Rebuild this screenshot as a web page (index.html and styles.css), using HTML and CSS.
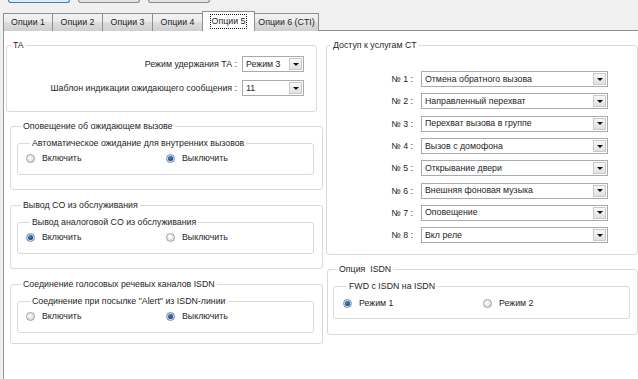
FILE: index.html
```html
<!DOCTYPE html>
<html lang="ru">
<head>
    <meta charset="UTF-8">
    <title>Опции 5</title>
    <link rel="stylesheet" href="styles.css">
</head>
<body>
    <div class="topbar">
        <div class="btn btn-focus"></div>
        <div class="btn"></div>
        <div class="btn"></div>
    </div>

    <div class="tabs">
        <div class="tab t1">Опции 1</div>
        <div class="tab t2">Опции 2</div>
        <div class="tab t3">Опции 3</div>
        <div class="tab t4">Опции 4</div>
        <div class="tab t5 active"><span class="focus">Опции 5</span></div>
        <div class="tab t6">Опции 6 (CTI)</div>
    </div>

    <div class="panel">
        <div class="col-left">
            <fieldset class="box box-ta">
                <legend>TA</legend>
                <div class="ta-row">
                    <span>Режим удержания ТА :</span>
                    <div class="select sel-short"><span class="val">Режим 3</span><span class="arrow"></span></div>
                </div>
                <div class="ta-row">
                    <span>Шаблон индикации ожидающего сообщения :</span>
                    <div class="select sel-short"><span class="val">11</span><span class="arrow"></span></div>
                </div>
            </fieldset>

            <fieldset class="box group">
                <legend>Оповещение об ожидающем вызове</legend>
                <fieldset class="box inner">
                    <legend>Автоматическое ожидание для внутренних вызовов</legend>
                    <div class="radios">
                        <label class="radio"><span class="dot"></span>Включить</label>
                        <label class="radio"><span class="dot on"></span>Выключить</label>
                    </div>
                </fieldset>
            </fieldset>

            <fieldset class="box group">
                <legend>Вывод CO из обслуживания</legend>
                <fieldset class="box inner">
                    <legend>Вывод аналоговой CO из обслуживания</legend>
                    <div class="radios">
                        <label class="radio"><span class="dot on"></span>Включить</label>
                        <label class="radio"><span class="dot"></span>Выключить</label>
                    </div>
                </fieldset>
            </fieldset>

            <fieldset class="box group group-last">
                <legend>Соединение голосовых речевых каналов ISDN</legend>
                <fieldset class="box inner">
                    <legend>Соединение при посылке "Alert" из ISDN-линии</legend>
                    <div class="radios">
                        <label class="radio"><span class="dot"></span>Включить</label>
                        <label class="radio"><span class="dot on"></span>Выключить</label>
                    </div>
                </fieldset>
            </fieldset>
        </div>

        <div class="col-right">
            <fieldset class="box box-ct">
                <legend>Доступ к услугам CT</legend>
                <div class="ct-list">
                    <span class="num">№ 1 :</span>
                    <div class="select"><span class="val">Отмена обратного вызова</span><span class="arrow"></span></div>
                    <span class="num">№ 2 :</span>
                    <div class="select"><span class="val">Направленный перехват</span><span class="arrow"></span></div>
                    <span class="num">№ 3 :</span>
                    <div class="select"><span class="val">Перехват вызова в группе</span><span class="arrow"></span></div>
                    <span class="num">№ 4 :</span>
                    <div class="select"><span class="val">Вызов с домофона</span><span class="arrow"></span></div>
                    <span class="num">№ 5 :</span>
                    <div class="select"><span class="val">Открывание двери</span><span class="arrow"></span></div>
                    <span class="num">№ 6 :</span>
                    <div class="select"><span class="val">Внешняя фоновая музыка</span><span class="arrow"></span></div>
                    <span class="num">№ 7 :</span>
                    <div class="select"><span class="val">Оповещение</span><span class="arrow"></span></div>
                    <span class="num">№ 8 :</span>
                    <div class="select"><span class="val">Вкл реле</span><span class="arrow"></span></div>
                </div>
            </fieldset>

            <fieldset class="box box-isdn">
                <legend>Опция&nbsp; ISDN</legend>
                <fieldset class="box inner inner-isdn">
                    <legend>FWD с ISDN на ISDN</legend>
                    <div class="radios">
                        <label class="radio"><span class="dot on"></span>Режим 1</label>
                        <label class="radio"><span class="dot"></span>Режим 2</label>
                    </div>
                </fieldset>
            </fieldset>
        </div>
    </div>
</body>
</html>
```

FILE: styles.css
```css
* {
    margin: 0;
    padding: 0;
    box-sizing: border-box;
}

body {
    font-family: 'Liberation Sans', Arial, sans-serif;
    font-size: 8.8px;
    color: #1e1e1e;
    background-color: #f0f0f0;
    height: 379px;
    overflow: hidden;
}

/* кнопки сверху (видна только нижняя часть) */
.topbar {
    display: flex;
    gap: 8px;
    padding-left: 8px;
    height: 4px;
}

.btn {
    width: 62px;
    height: 3px;
    border: 1px solid #8a8a8a;
    border-top: none;
    border-radius: 0 0 3px 3px;
    background: #e4e4e4;
}

.btn-focus {
    border-color: #3c7fb1;
    background: #dcecf8;
}

/* вкладки */
.tabs {
    display: flex;
    align-items: flex-end;
    margin-top: 7px;
    padding-left: 3px;
    height: 20px;
}

.tab {
    height: 18px;
    margin-left: -1px;
    border: 1px solid #8e8f8f;
    border-bottom: none;
    background: linear-gradient(#f2f2f2 0%, #ebebeb 45%, #dddddd 50%, #cfcfcf 100%);
    display: flex;
    align-items: center;
    justify-content: center;
    line-height: 11px;
}

.t1 { width: 50px; margin-left: 0; }
.t2 { width: 51px; }
.t3 { width: 51px; }
.t4 { width: 51px; }
.t5 { width: 53px; }
.t6 { width: 65px; }

.tab.active {
    height: 20px;
    background: #fff;
    position: relative;
    z-index: 1;
}

.focus {
    border: 1px dotted #222;
    padding: 1px 1px;
}

/* панель */
.panel {
    display: flex;
    margin-top: -1px;
    margin-left: 3px;
    height: 349px;
    background: #fff;
    border-left: 1px solid #9a9a9a;
    border-top: 1px solid #8e8f8f;
}

.col-left {
    width: 322px;
}

.col-right {
    flex: 1;
}

.box {
    border: 1px solid #dadada;
    border-radius: 3px;
}

.box legend {
    line-height: 11px;
    padding: 0 2px;
    margin-left: 4px;
}

.box-ta {
    margin: 9px 9px 0 2px;
    padding: 5px 12px 15px 0;
}

.ta-row {
    display: flex;
    justify-content: flex-end;
    align-items: center;
    gap: 5px;
}

.ta-row + .ta-row {
    margin-top: 8px;
}

.group {
    margin: 9px 3px 0 6px;
    padding: 6px 8px 14px 6px;
}

.group + .group {
    margin-top: 10px;
}

.group-last {
    padding-bottom: 10px;
}

.inner {
    padding: 3px 0 10px 8px;
}

.radios {
    display: grid;
    grid-template-columns: 140px 140px;
    height: 12px;
    align-items: center;
}

.radio {
    display: flex;
    align-items: center;
    gap: 7px;
}

.dot {
    width: 9px;
    height: 9px;
    border-radius: 50%;
    border: 1px solid #a0a0a0;
    background: radial-gradient(circle at 40% 35%, #ffffff 0%, #e6e6e6 55%, #c8c8c8 100%);
    display: flex;
    align-items: center;
    justify-content: center;
}

.dot.on {
    border-color: #7890ab;
    background: radial-gradient(circle, #dbe8f5 0%, #c3d6ea 100%);
}

.dot.on::after {
    content: "";
    width: 5px;
    height: 5px;
    border-radius: 50%;
    background: radial-gradient(circle at 40% 35%, #4e86c4 0%, #1d4b86 60%, #173a66 100%);
}

/* выпадающие списки */
.select {
    height: 16px;
    border: 1px solid #a7abb0;
    background: #fff;
    display: flex;
    align-items: center;
    justify-content: space-between;
    padding: 0 1px 0 3px;
}

.sel-short {
    width: 62px;
}

.val {
    white-space: nowrap;
    line-height: 11px;
}

.arrow {
    width: 13px;
    height: 12px;
    border: 1px solid #c9c9c9;
    background: linear-gradient(#f7f7f7, #e1e1e1);
    display: flex;
    align-items: center;
    justify-content: center;
}

.arrow::after {
    content: "";
    border-left: 3px solid transparent;
    border-right: 3px solid transparent;
    border-top: 3px solid #111;
}

.box-ct {
    margin: 9px 0 0 0;
    padding: 17px 0 8px 0;
}

.ct-list {
    display: grid;
    grid-template-columns: 86px 187px;
    grid-auto-rows: 22.3px;
    column-gap: 8px;
    align-items: center;
}

.num {
    text-align: right;
}

.box-isdn {
    margin: 9px 0 0 1px;
    padding: 6px 7px 15px 5px;
}

.inner-isdn {
    padding: 5px 0 9px 9px;
}
```
